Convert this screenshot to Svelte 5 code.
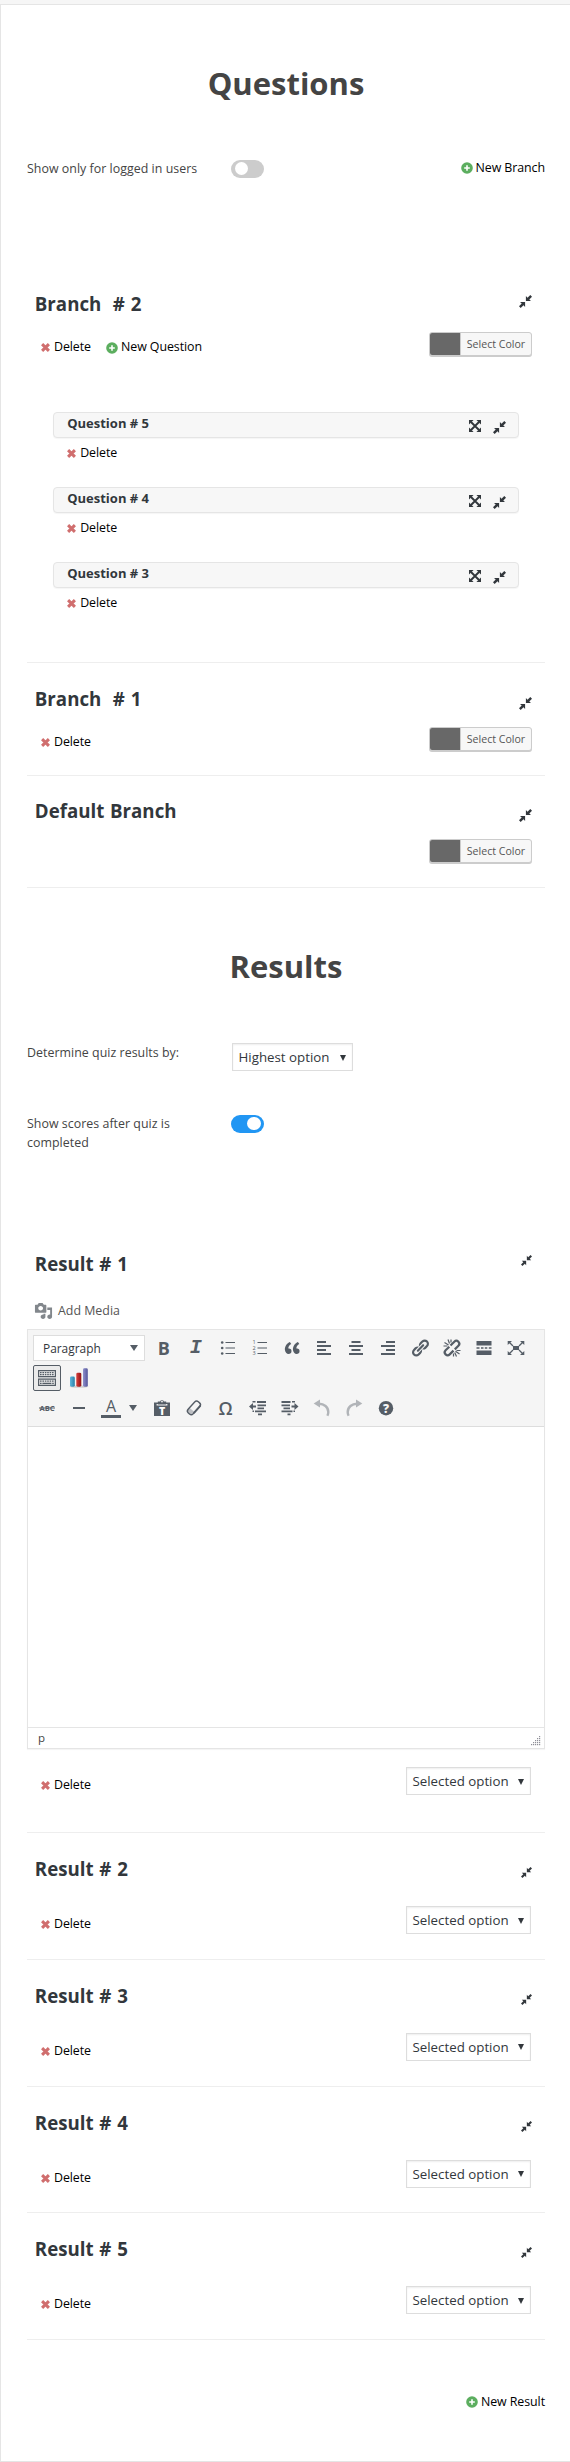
<script>
  const branches = [
    { title: 'Branch \u00a0# 2', raised: true, del: true, add: true, questions: [5, 4, 3] },
    { title: 'Branch \u00a0# 1', del: true },
    { title: 'Default Branch', tight: true }
  ];
  const results = [1, 2, 3, 4, 5];
  const topTools = ['bold', 'italic', 'ul', 'ol', 'quote', 'left', 'center', 'right', 'link', 'unlink', 'more', 'full'];
  const lowTools = ['paste', 'eraser', 'omega', 'outdent', 'indent', 'undo', 'redo', 'help'];
</script>

{#snippet shrink(size)}
  <svg class="shrink" width={size} height={size} viewBox="0 0 13 13">
    <path d="M6.9 1V6.100H12L10.300 4.500 13 1.700 11.300 0 8.500 2.700zM6.100 12V6.900H1l1.700 1.600L0 11.300 1.700 13l2.800-2.700z" fill="currentColor" />
  </svg>
{/snippet}

{#snippet grow()}
  <svg class="grow" width="12" height="12" viewBox="0 0 12 12">
    <path d="M2 2l8 8M10 2l-8 8" stroke="currentColor" stroke-width="1.9" />
    <path d="M0 0h4.600L0 4.600zM12 0v4.600L7.400 0zM0 12V7.400L4.600 12zM12 12H7.400L12 7.400z" fill="currentColor" />
  </svg>
{/snippet}

{#snippet del()}
  <a class="link del">
    <svg width="9" height="9" viewBox="0 0 9 9"><path d="M1.100 1.100l6.800 6.800M7.900 1.100L1.100 7.900" stroke="#d06e6e" stroke-width="3" /></svg>
    <span>Delete</span>
  </a>
{/snippet}

{#snippet add(label)}
  <a class="link add">
    <svg width="12" height="12" viewBox="0 0 12 12"><circle cx="6" cy="6" r="5.800" fill="#5cae5f" /><path d="M6 3.200v5.600M3.200 6h5.600" stroke="#fff" stroke-width="1.600" /></svg>
    <span>{label}</span>
  </a>
{/snippet}

{#snippet dropdown(label)}
  <div class="dropdown">
    <span>{label}</span>
    <svg width="6" height="6" viewBox="0 0 6 6"><path d="M0 0h6L3 6z" fill="#32373c" /></svg>
  </div>
{/snippet}

{#snippet tool(name)}
  <div class="tool" class:off={name === 'undo' || name === 'redo'}>
    {#if name === 'bold'}
      <span class="glyph b">B</span>
    {:else if name === 'italic'}
      <span class="glyph i">I</span>
    {:else if name === 'omega'}
      <span class="glyph o">Ω</span>
    {:else}
    <svg width="20" height="20" viewBox="0 0 20 20" fill="currentColor">
      {#if name === 'ul'}
        <circle cx="4.200" cy="4.500" r="1.300" /><circle cx="4.200" cy="10" r="1.300" /><circle cx="4.200" cy="15.500" r="1.300" />
        <path d="M7.500 4h9.500v1H7.500zM7.500 9.500h9.500v1H7.500zM7.500 15h9.500v1H7.500z" />
      {:else if name === 'ol'}
        <text x="2.600" y="6.400" font-family="Open Sans, sans-serif" font-size="5.500">1</text>
        <text x="2.600" y="11.900" font-family="Open Sans, sans-serif" font-size="5.500">2</text>
        <text x="2.600" y="17.400" font-family="Open Sans, sans-serif" font-size="5.500">3</text>
        <path d="M7.500 4h9.500v1H7.500zM7.500 9.500h9.500v1H7.500zM7.500 15h9.500v1H7.500z" />
      {:else if name === 'quote'}
        <path d="M9.490 13.220c0-.74-.2-1.380-.61-1.900-.62-.78-1.830-.88-2.530-.72-.29-1.650 1.110-3.750 2.920-4.650L7.880 4c-2.730 1.300-5.420 4.280-4.960 8.050C3.210 14.430 4.590 16 6.540 16c.85 0 1.560-.25 2.120-.75s.83-1.180.83-2.030zm8.050 0c0-.74-.2-1.380-.61-1.900-.63-.78-1.830-.88-2.530-.72-.29-1.650 1.110-3.750 2.920-4.650L15.930 4c-2.730 1.300-5.410 4.280-4.950 8.050.29 2.380 1.660 3.950 3.610 3.950.85 0 1.560-.25 2.120-.75s.83-1.180.83-2.030z" />
      {:else if name === 'left'}
        <path d="M3 3h9v2H3zM3 7h14v2H3zM3 11h9v2H3zM3 15h14v2H3z" />
      {:else if name === 'center'}
        <path d="M5.500 3h9v2h-9zM3 7h14v2H3zM5.500 11h9v2h-9zM3 15h14v2H3z" />
      {:else if name === 'right'}
        <path d="M8 3h9v2H8zM3 7h14v2H3zM8 11h9v2H8zM3 15h14v2H3z" />
      {:else if name === 'link'}
        <path d="M17.740 2.760c1.680 1.690 1.680 4.410 0 6.100l-1.530 1.520c-1.120 1.120-2.700 1.470-4.140 1.090l2.620-2.610.76-.77.76-.76c.84-.84.84-2.200 0-3.040-.84-.85-2.200-.85-3.040 0l-.77.76-3.380 3.380c-.37-1.440-.02-3.020 1.100-4.140l1.520-1.530c1.690-1.680 4.420-1.680 6.100 0zM8.590 13.430l5.340-5.340c.42-.42.42-1.100 0-1.520-.44-.43-1.130-.39-1.530 0l-5.330 5.340c-.42.42-.42 1.100 0 1.520.44.43 1.130.39 1.520 0zm-.76 2.290l4.140-4.150c.38 1.440.03 3.020-1.090 4.140l-1.520 1.530c-1.690 1.680-4.410 1.680-6.100 0-1.680-1.680-1.680-4.420 0-6.100l1.530-1.520c1.120-1.120 2.700-1.470 4.140-1.100l-4.140 4.150c-.85.84-.85 2.200 0 3.050.84.84 2.200.84 3.040 0z" />
      {:else if name === 'unlink'}
        <g fill="none" stroke="currentColor">
          <path d="M8.500 7.500l3.800-3.800a2.900 2.900 0 0 1 4.100 0 2.900 2.900 0 0 1 0 4.100L12.800 11.400M7.300 8.700L3.600 12.300a2.900 2.900 0 0 0 0 4.100 2.900 2.900 0 0 0 4.100 0l3.800-3.800" stroke-width="2.200" />
          <path d="M1.500 8h4M2.500 4.500l4 2.500M6 1.500l1.500 4M9 1.500v3M18.500 12.500h-4M17.500 16l-4-2.800M14.500 18.500l-1.800-4M11.500 18.500v-3" stroke-width="1.200" />
        </g>
      {:else if name === 'more'}
        <path d="M2.500 3h15v4.500h-15zM2.500 9.200h3v1.600h-3zM7 9.200h2.500v1.600H7zM10.800 9.200h2.500v1.600h-2.500zM14.800 9.200h2.700v1.600h-2.700zM2.500 12.500h15V17h-15z" />
      {:else if name === 'full'}
        <path d="M7 8h6v4H7z" />
        <path d="M3 4l4 4M17 4l-4 4M3 16l4-4M17 16l-4-4" stroke="currentColor" stroke-width="1.300" />
        <path d="M1.700 3H6L1.700 7zM18.300 3v4L14 3zM1.700 17v-4L6 17zM18.300 17H14l4.300-4z" />
      {:else if name === 'keyboard'}
        <path fill-rule="evenodd" d="M1 2h18v7.300H1zm1.200 1.200v4.900h15.600V3.200zM1 10.500h18V18H1zm1.200 1.200v5.100h15.600v-5.100z" />
        <path d="M3 4.700h14M3 6.700h14M3 13.200h14" stroke="currentColor" stroke-width="1.200" stroke-dasharray="1.600 .8" />
        <path d="M3 15.400h14" stroke="currentColor" stroke-width="1.200" stroke-dasharray="1.600 .8 9 .8 1.600" />
      {:else if name === 'chart'}
        <defs>
          <linearGradient id="c1" x1="0" x2="1"><stop offset="0" stop-color="#5fb8dc" /><stop offset="1" stop-color="#2a7fa8" /></linearGradient>
          <linearGradient id="c2" x1="0" x2="1"><stop offset="0" stop-color="#d8403c" /><stop offset="1" stop-color="#8e1013" /></linearGradient>
          <linearGradient id="c3" x1="0" x2="1"><stop offset="0" stop-color="#8f90cc" /><stop offset="1" stop-color="#54559a" /></linearGradient>
        </defs>
        <ellipse cx="10" cy="18.600" rx="9.500" ry="1.200" fill="#cfcfcf" />
        <rect x="1" y="8.500" width="4.800" height="10.200" rx="1.400" fill="url(#c1)" />
        <rect x="7.300" y="4.700" width="5" height="14" rx="1.400" fill="url(#c2)" />
        <rect x="14" y=".3" width="4.800" height="18.400" rx="1.400" fill="url(#c3)" />
      {:else if name === 'abc'}
        <text x="10" y="12.700" font-family="Open Sans, sans-serif" font-size="7.600" font-weight="700" text-anchor="middle" textLength="15">ABC</text>
        <path d="M2 9.500h16v1H2z" />
      {:else if name === 'hr'}
        <path d="M4 9h12v2H4z" />
      {:else if name === 'paste'}
        <path fill-rule="evenodd" d="M2 4.500h3.800V3.400h2.400a1.900 1.900 0 0 1 3.600 0h2.400v1.100H18V18H2zM4.600 5.900v1.500h10.800V5.900h-1.200v.7H5.800v-.7zM10 2.600a.9.9 0 1 0 0 1.800.9.9 0 0 0 0-1.800z" />
        <text x="10" y="16.500" font-family="Open Sans, sans-serif" font-size="10.500" font-weight="800" text-anchor="middle" fill="#fff">T</text>
      {:else if name === 'eraser'}
        <g transform="rotate(-48 10 10)">
          <rect x="2.500" y="6.500" width="15" height="6.800" rx="2.600" fill="none" stroke="currentColor" stroke-width="1.400" />
          <path d="M5.500 6.500h1.800v6.800H5.500a2.600 2.600 0 0 1-2.600-2.600V9.200A2.600 2.600 0 0 1 5.500 6.500z" fill-opacity=".35" />
          <path d="M6 12.300h10v1.900H6z" />
        </g>
      {:else if name === 'outdent'}
        <path d="M1 8.500L5 5v2.500h3v2H5V12zM9 3h9v2H9zM4.500 3H7.500v1.500h-3zM9.500 6.500H18v1.700H9.500zM9.500 9.500H16v1.700H9.500zM7 12.500h11v1.700H7zM10 15.500h4v1.700h-4zM4.500 12.500h1.500v1.500H4.500z" />
      {:else if name === 'indent'}
        <path d="M18.500 8.500L14.500 5v2.500h-3v2h3V12zM1.500 3h9v2h-9zM12 3h3v1.500h-3zM1.500 6.500H10v1.700H1.500zM3.500 9.500H10v1.700H3.500zM1.500 12.500h11v1.700h-11zM7.500 15.500h3v1.700h-3zM13.500 12.500H15v1.500h-1.500z" />
      {:else if name === 'undo'}
        <path d="M1.700 5.500L8 1.500v8z" /><path d="M7 5.700c5 0 9.300 3.300 9.300 8.300 0 1.500-.3 2.700-.9 3.800" fill="none" stroke="currentColor" stroke-width="2.400" />
      {:else if name === 'redo'}
        <path d="M18.300 5.500L12 1.500v8z" /><path d="M13 5.700c-5 0-9.300 3.300-9.300 8.300 0 1.500.3 2.700.9 3.800" fill="none" stroke="currentColor" stroke-width="2.400" />
      {:else if name === 'help'}
        <circle cx="10" cy="10.200" r="7.200" />
        <text x="10" y="14.600" font-family="Open Sans, sans-serif" font-size="12" font-weight="800" text-anchor="middle" fill="#f5f5f5">?</text>
      {/if}
    </svg>
    {/if}
  </div>
{/snippet}

<div class="page">
  <div class="panel">
    <h2>Questions</h2>
    <div class="setting first">
      <div class="label">Show only for logged in users</div>
      <div class="toggle"><i></i></div>
      <div class="push">{@render add('New Branch')}</div>
    </div>

    <div class="branches">
      {#each branches as b}
        <section class="block" class:tight={b.tight}>
          <div class="head" class:raised={b.raised}>
            <h3>{b.title}</h3>
            {@render shrink(13)}
          </div>
          <div class="row">
            <div class="actions">
              {#if b.del}{@render del()}{/if}
              {#if b.add}{@render add('New Question')}{/if}
            </div>
            <div class="picker"><i></i><span>Select Color</span></div>
          </div>
          {#if b.questions}
            <div class="questions">
              {#each b.questions as q}
                <div class="question">
                  <div class="bar">
                    <h4>Question # {q}</h4>
                    {@render grow()}
                    {@render shrink(13)}
                  </div>
                  {@render del()}
                </div>
              {/each}
            </div>
          {/if}
        </section>
      {/each}
    </div>

    <h2>Results</h2>
    <div class="setting second">
      <div class="label">Determine quiz results by:</div>
      {@render dropdown('Highest option')}
    </div>
    <div class="setting third">
      <div class="label">Show scores after quiz is completed</div>
      <div class="toggle on"><i></i></div>
    </div>

    <div class="results">
      {#each results as r}
        <section class="block result" class:open={r === 1}>
          <div class="head" class:raised={r === 1}>
            <h3>Result # {r}</h3>
            {@render shrink(11)}
          </div>
          {#if r === 1}
            <div class="media">
              <svg width="19" height="18" viewBox="0 0 20 20" preserveAspectRatio="none"><path fill="#82878c" d="M13 11V4c0-.55-.45-1-1-1h-1.670L9 1H5L3.670 3H2c-.55 0-1 .45-1 1v7c0 .55.45 1 1 1h10c.55 0 1-.45 1-1zM7 4.500c1.380 0 2.500 1.120 2.500 2.500S8.380 9.500 7 9.500 4.500 8.380 4.500 7 5.620 4.500 7 4.500zM14 6h5v10.500c0 1.380-1.120 2.500-2.500 2.500S14 17.880 14 16.500s1.120-2.500 2.500-2.500c.17 0 .34.02.5.05V9h-3V6zm-4 8.050V13h2v3.500c0 1.380-1.120 2.500-2.500 2.500S7 17.880 7 16.500 8.120 14 9.500 14c.17 0 .34.02.5.05z" /></svg>
              <span>Add Media</span>
            </div>
            <div class="editor">
              <div class="toolbar">
                <div class="tools">
                  <div class="format"><span>Paragraph</span><b class="caret"></b></div>
                  {#each topTools as t}{@render tool(t)}{/each}
                </div>
                <div class="tools">
                  <div class="pressed">{@render tool('keyboard')}</div>
                  {@render tool('chart')}
                </div>
                <div class="tools">
                  {@render tool('abc')}
                  {@render tool('hr')}
                  <div class="colour"><span>A</span><b class="caret"></b></div>
                  {#each lowTools as t}{@render tool(t)}{/each}
                </div>
              </div>
              <div class="canvas"></div>
              <div class="status">
                <span>p</span>
                <svg width="10" height="10" viewBox="0 0 10 10" fill="#8f8f98">
                  {#each [0, 1, 2, 3, 4] as y}
                    {#each [0, 1, 2, 3, 4] as x}
                      {#if x + y >= 4}<rect x={x * 2} y={y * 2} width="1.200" height="1.200" />{/if}
                    {/each}
                  {/each}
                </svg>
              </div>
            </div>
          {/if}
          <div class="row">
            <div class="actions">{@render del()}</div>
            {@render dropdown('Selected option')}
          </div>
        </section>
      {/each}
    </div>
    <div class="footer">{@render add('New Result')}</div>
  </div>
</div>

<style>
  :global(body) { background: #f6f6f6; overflow: hidden; }
  .page {
    box-sizing: border-box; width: 570px; height: 2462px; padding-top: 4px; overflow: hidden;
    font-family: "Open Sans", "Noto Sans", sans-serif; font-size: 12.4px; line-height: 20px; color: #444;
  }
  .panel {
    box-sizing: border-box; width: 571px; height: 2458px; padding: 0 25px 0 26px;
    background: #fff; border: 1px solid #e5e5e5;
  }
  h2, h3, h4 { margin: 0; font-weight: 700; white-space: nowrap; }
  h2 { padding: 58px 0 1px; font-size: 31px; line-height: 40px; text-align: center; color: #444; }
  h3 { font-size: 18.7px; line-height: 26px; word-spacing: .9px; color: #32373c; }
  h4 { flex: 1; font-size: 13px; line-height: 20px; color: #32373c; }
  svg { display: block; flex: none; overflow: visible; }

  .setting { display: flex; align-items: flex-start; }
  .first { margin-top: 53px; height: 111px; }
  .second { margin-top: 55px; height: 71px; }
  .third { height: 115px; }
  .label { width: 180px; margin-right: 24px; line-height: 19px; letter-spacing: .03px; }
  .first .label { padding-top: 2px; }
  .second .label { padding-top: 1px; }
  .third .label { padding-top: 1px; }
  .second .dropdown { width: 121px; margin: 1px 0 0 1px; }
  .push { margin-left: auto; }

  .toggle { box-sizing: border-box; width: 33px; height: 18px; margin-top: 3px; padding: 2px 3.5px; border-radius: 9px; background: #ccc; display: flex; }
  .toggle i { width: 13.4px; height: 13.4px; border-radius: 50%; background: #fff; }
  .third .toggle { margin-top: 2px; }
  .on { background: #2196f3; justify-content: flex-end; }

  .link { display: flex; align-items: center; color: #000; white-space: nowrap; letter-spacing: -.07px; }
  .del { gap: 4.5px; }
  .del svg { margin-top: 1px; }
  .add { gap: 3px; }
  .add svg { margin-top: 1px; }
  .push .link { padding-top: .5px; }

  .block { padding: 23px 0; border-bottom: 1px solid #eee; }
  .tight { padding-top: 22px; }
  .head { display: flex; justify-content: space-between; height: 26px; padding: 0 13px 0 7.8px; color: #32373c; }
  .head :global(.shrink) { margin-top: 11px; }
  .raised :global(.shrink) { margin-top: 4px; }
  .row { display: flex; justify-content: space-between; align-items: flex-start; margin-top: 15px; padding: 0 13px 0 13.5px; }
  .actions { display: flex; gap: 15px; padding-top: 5px; }

  .picker {
    box-sizing: border-box; display: flex; width: 103px; height: 24px; margin-bottom: 1px;
    border: 1px solid #ccc; border-radius: 3px; background: #f7f7f7; box-shadow: 0 1px 0 #ccc; overflow: hidden;
  }
  .picker i { width: 30px; background: #686868; border-right: 1px solid #ccc; }
  .picker span { flex: 1; text-align: center; font-size: 10.6px; line-height: 22px; color: #555; white-space: nowrap; }

  .questions { margin-top: 55px; padding: 0 26px 2px; }
  .question { height: 75px; }
  .bar {
    box-sizing: border-box; display: flex; height: 26px; padding: 0 12px 0 13.2px; color: #32373c;
    background: #f7f7f7; border: 1px solid #e5e5e5; border-radius: 4px; box-shadow: 0 1px 1px rgba(0,0,0,.04);
  }
  .bar :global(.grow) { margin: 7px 12px 0 0; }
  .bar :global(.shrink) { margin-top: 8px; }
  .question > .link { padding: 5px 0 0 13.7px; }

  .dropdown {
    box-sizing: border-box; display: flex; align-items: center; justify-content: space-between; width: 125px; height: 28px;
    padding: 0 6px 0 5.5px; border: 1px solid #ddd; background: #fff; box-shadow: inset 0 1px 2px rgba(0,0,0,.07);
    color: #32373c; font-size: 13.3px; white-space: nowrap;
  }
  .dropdown svg { margin-top: 1px; }

  .result { padding-bottom: 24.75px; }
  .result .row { margin-top: 24px; padding-right: 14px; }
  .result .actions { padding-top: 8px; }
  .open { padding-bottom: 37px; }
  .open .row { margin-top: 18px; }

  .media { display: flex; align-items: center; gap: 5px; height: 20px; margin: 23.5px 0 8.5px; padding-left: 7px; color: #555; }
  .editor { box-sizing: border-box; display: flex; flex-direction: column; height: 420px; border: 1px solid #e5e5e5; box-shadow: 0 1px 1px rgba(0,0,0,.04); }
  .toolbar { box-sizing: border-box; display: flex; flex-direction: column; gap: 4px; height: 97px; padding: 5px; background: #f5f5f5; border-bottom: 1px solid #ddd; }
  .tools { display: flex; gap: 4px; height: 26px; }
  .tool { display: flex; align-items: center; justify-content: center; width: 28px; height: 26px; color: #555d66; }
  .glyph { line-height: 26px; }
  .b { font-size: 18px; font-weight: 700; }
  .i { font-family: "Liberation Mono", monospace; font-size: 20px; font-weight: 700; font-style: italic; }
  .o { font-size: 18px; font-weight: 600; }
  .off { opacity: .42; }
  .pressed { box-sizing: border-box; display: flex; align-items: center; justify-content: center; width: 28px; height: 26px; border: 1px solid #555d66; border-radius: 2px; background: #ebebeb; }
  .format {
    box-sizing: border-box; display: flex; align-items: center; justify-content: space-between; width: 112px; height: 26px; margin-right: .7px;
    padding: 0 6px 0 9px; border: 1px solid #ddd; background: #fff; color: #32373c; font-size: 11.9px;
  }
  .caret { width: 0; height: 0; border: 4px solid transparent; border-top: 6px solid #555d66; border-bottom: 0; }
  .colour { display: flex; align-items: center; width: 46.5px; gap: 8px; padding-left: 4px; box-sizing: border-box; color: #555d66; }
  .colour span { box-sizing: border-box; width: 20px; height: 20px; border-bottom: 3px solid #555d66; text-align: center; font-size: 16px; line-height: 16px; }
  .canvas { flex: 1; background: #fff; }
  .status { box-sizing: border-box; display: flex; justify-content: space-between; align-items: center; height: 21px; padding: 0 3px 0 10px; border-top: 1px solid #e5e5e5; font-size: 11.5px; }
  .status svg { margin-top: 5px; }

  .footer { display: flex; justify-content: flex-end; padding-top: 51.5px; }
</style>
